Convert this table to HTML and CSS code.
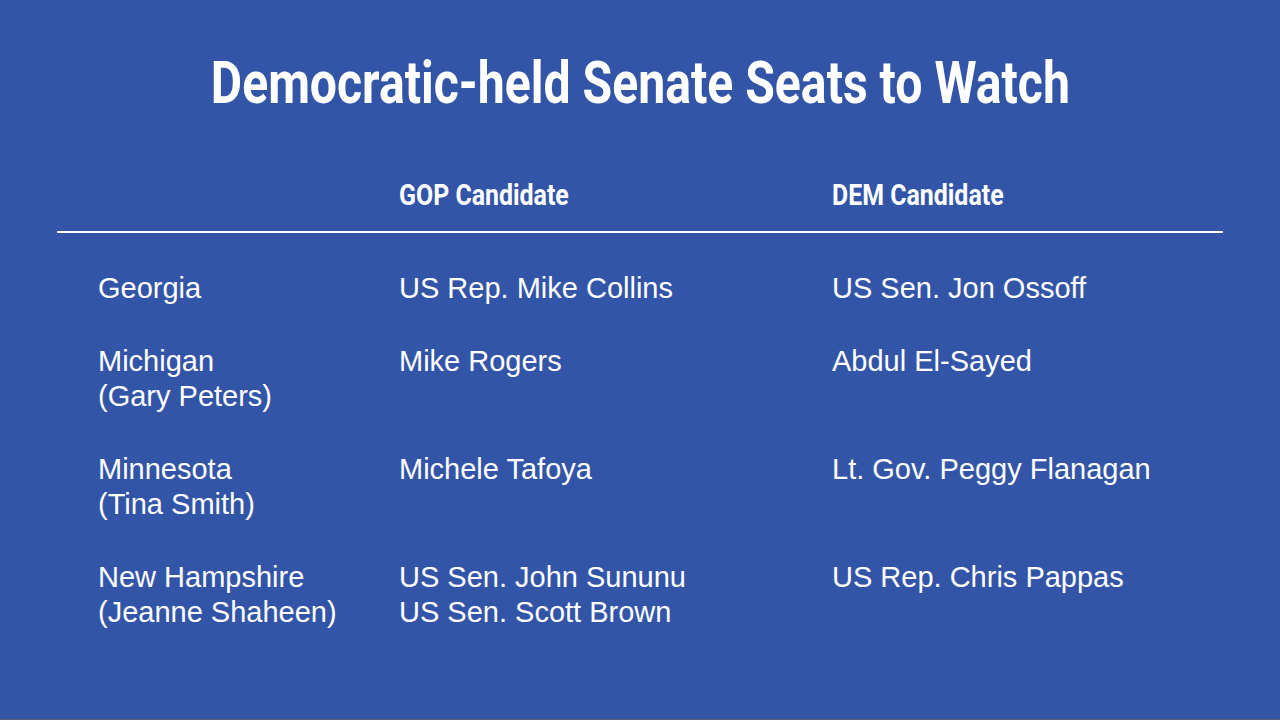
FILE: index.html
```html
<!DOCTYPE html>
<html>
<head>
<meta charset="utf-8">
<link rel="stylesheet" href="styles.css">
</head>
<body>
<main class="slide">
  <h1 class="title"><span class="narrow">Democratic-held Senate Seats to Watch</span></h1>
  <div class="table">
    <div class="head">
      <div class="cell state"></div>
      <div class="cell gop"><span class="narrow">GOP Candidate</span></div>
      <div class="cell dem"><span class="narrow">DEM Candidate</span></div>
    </div>
    <div class="rule"></div>
    <div class="rows">
      <div class="row">
        <div class="cell state">Georgia</div>
        <div class="cell gop">US Rep. Mike Collins</div>
        <div class="cell dem">US Sen. Jon Ossoff</div>
      </div>
      <div class="row">
        <div class="cell state">Michigan<br>(Gary Peters)</div>
        <div class="cell gop">Mike Rogers</div>
        <div class="cell dem">Abdul El-Sayed</div>
      </div>
      <div class="row">
        <div class="cell state">Minnesota<br>(Tina Smith)</div>
        <div class="cell gop">Michele Tafoya</div>
        <div class="cell dem">Lt. Gov. Peggy Flanagan</div>
      </div>
      <div class="row">
        <div class="cell state">New Hampshire<br>(Jeanne Shaheen)</div>
        <div class="cell gop">US Sen. John Sununu<br>US Sen. Scott Brown</div>
        <div class="cell dem">US Rep. Chris Pappas</div>
      </div>
    </div>
  </div>
</main>
</body>
</html>
```
FILE: styles.css
```css
html, body {
  margin: 0;
  padding: 0;
}
body {
  width: 1280px;
  height: 720px;
  background: #3355a8;
  overflow: hidden;
}
.slide {
  width: 1280px;
  height: 719px;
  background: #3355a8;
  border-bottom: 1px solid #5a5f6e;
  color: #ffffff;
  font-family: "Liberation Sans", Arial, sans-serif;
}
.narrow {
  display: inline-block;
  transform: scaleX(0.83);
  white-space: nowrap;
}
.title {
  margin: 0;
  padding-top: 50px;
  text-align: center;
  font-family: "Roboto", sans-serif;
  font-weight: 700;
  font-size: 59px;
  line-height: 66px;
}
.title .narrow {
  transform: scaleX(0.816);
  transform-origin: center;
}
.table {
  padding: 0 57px;
  margin-top: 62px;
}
.head {
  display: flex;
  font-family: "Roboto", sans-serif;
  font-weight: 700;
  font-size: 30px;
  line-height: 34px;
  padding-bottom: 19px;
}
.head .narrow {
  transform-origin: left center;
}
.cell.state { width: 342px; padding-left: 41px; box-sizing: border-box; }
.cell.gop { width: 433px; }
.cell.dem { flex: 1; }
.rule {
  height: 2px;
  background: #ffffff;
}
.rows {
  padding-top: 38px;
  display: flex;
  flex-direction: column;
  gap: 38px;
  font-size: 29px;
  line-height: 35px;
}
.row {
  display: flex;
}
```
